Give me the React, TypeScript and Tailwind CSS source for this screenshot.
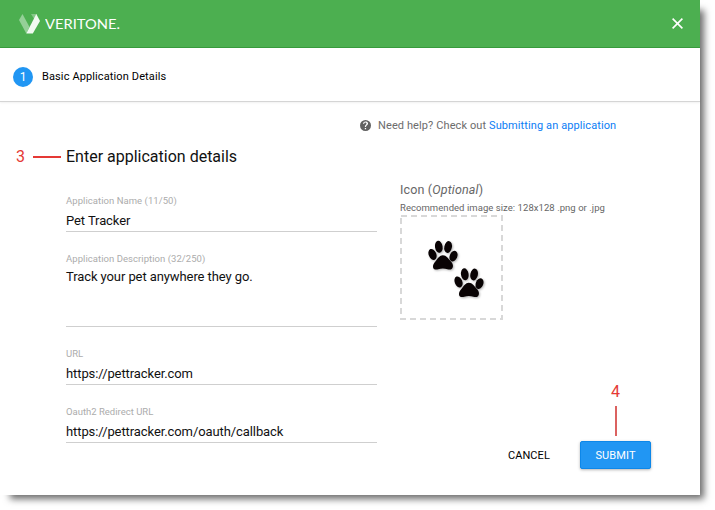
import React from "react";

type FieldProps = {
  label: string;
  value: string;
  className: string;
  labelClass: string;
  valueClass: string;
};

function Field({ label, value, className, labelClass, valueClass }: FieldProps) {
  return (
    <div className={`flex flex-col border-b border-[#cfcfcf] ${className}`}>
      <span className={`text-[9.5px] leading-3 whitespace-nowrap text-[#acacac] ${labelClass}`}>{label}</span>
      <span className={`text-[13px] leading-4 tracking-[-0.09px] whitespace-nowrap text-[#111] ${valueClass}`}>{value}</span>
    </div>
  );
}

function Paw() {
  return (
    <svg width="31" height="31" viewBox="0 0 31 31" className="drop-shadow-[1px_1px_1px_rgba(0,0,0,0.3)]" fill="#090304">
      <ellipse cx="11.3" cy="6.8" rx="3.8" ry="6" transform="rotate(-9 11.3 6.8)" />
      <ellipse cx="20.6" cy="7" rx="3.8" ry="6" transform="rotate(12 20.6 7)" />
      <ellipse cx="5" cy="14.4" rx="3.8" ry="5.7" transform="rotate(-22 5 14.4)" />
      <ellipse cx="26" cy="16.1" rx="3.8" ry="5.5" transform="rotate(22 26 16.1)" />
      <path d="M15.3 15.3c3.7 0 5.3 3.2 7.5 5.5 2 2.1 3 3.8 2.6 6-.6 3.2-3.3 3-5.5 2.4-3.1-.9-6.1-.9-9.2 0-2.5.7-5 .3-5.2-2.3-.2-2.1.9-3.8 2.8-6 2-2.4 3.7-5.6 7-5.6Z" />
    </svg>
  );
}

export default function App() {
  return (
    <div className="h-[510px] w-[715px] overflow-hidden bg-white font-[Roboto,sans-serif]">
      <main className="flex h-[495px] w-[700px] flex-col bg-white shadow-[7px_7px_7px_-3px_rgba(0,0,0,0.58)]">
        <header className="flex h-12 shrink-0 items-center justify-between border-b border-[#389b3d] bg-[#4caf50] pr-[17px] pl-[19px]">
          <div className="flex items-center">
            <svg width="21" height="20" viewBox="0 0 21 20">
              <path d="M0 6 3.5 0 10.5 13 7.3 19.5Z" fill="#94d097" />
              <path d="M12 0h6l-2.5 5.5Z" fill="#86c889" />
              <path d="M17.3 0 21 7 13.8 19.5H7.3Z" fill="#f1faf1" />
            </svg>
            <svg width="76" height="20" viewBox="0 0 76 20" className="ml-[5px]">
              <text x="0" y="15" fill="#fff" fontFamily="Lato, sans-serif" fontSize="13.8" textLength="75" lengthAdjust="spacingAndGlyphs">VERITONE.</text>
            </svg>
          </div>
          <svg width="11" height="11" viewBox="0 0 11 11" stroke="#fff" strokeWidth="1.6" fill="none">
            <path d="m.6.6 9.8 9.8M10.4.6.6 10.4" />
          </svg>
        </header>

        <div className="flex h-[54px] shrink-0 items-center border-b border-[#d5d5d5] pt-[5px] pl-[13px] shadow-[0_1px_2px_rgba(0,0,0,0.06)]">
          <span className="flex size-5 items-center justify-center rounded-full bg-[#2196f3] text-xs text-white">1</span>
          <span className="mt-px ml-[9px] text-[11px] tracking-[0.12px] text-black">Basic Application Details</span>
        </div>

        <div className="mt-[17px] flex h-[14px] items-center pl-[360px] text-[11px] leading-[14px] whitespace-nowrap text-[#6c6c6c]">
          <svg width="11" height="11" viewBox="0 0 24 24" fill="#616161" className="-mt-px">
            <path fillRule="evenodd" d="M12 0a12 12 0 1 0 0 24 12 12 0 0 0 0-24Zm1.3 20h-2.8v-2.7h2.8V20Zm2.6-9.2c-1.5 1.5-2.6 2-2.6 4.4h-2.7c0-3.2 1.2-4.1 2.7-5.6 2-2.1.4-4-1.3-4-1.6 0-2.7 1.1-2.7 2.7H6.5C6.5 5 9 3 12 3c5 0 7.5 4 3.9 7.8Z" />
          </svg>
          <span className="ml-[7px] tracking-[0.1px]">Need help? Check out <a className="text-[#0b7df5]">Submitting an application</a></span>
        </div>

        <div className="flex flex-1">
          <section className="w-[377px] shrink-0">
            <div className="mt-[14px] flex h-5 items-center">
              <span className="ml-4 w-4 text-base text-[#e53935]">3</span>
              <span className="ml-px h-[1.5px] w-7 bg-[#e53935]" />
              <h1 className="ml-[5px] text-base whitespace-nowrap text-[#111]">Enter application details</h1>
            </div>
            <div className="ml-[66px]">
              <Field label="Application Name (11/50)" value="Pet Tracker" className="mt-[28px] h-[37px]" labelClass="tracking-[0.05px]" valueClass="mt-[6px]" />
              <Field label="Application Description (32/250)" value="Track your pet anywhere they go." className="mt-[21px] h-[74px]" labelClass="tracking-[0.05px]" valueClass="mt-[4px]" />
              <Field label="URL" value="https://pettracker.com" className="mt-[21px] h-[37px]" labelClass="" valueClass="mt-[6px]" />
              <Field label="Oauth2 Redirect URL" value="https://pettracker.com/oauth/callback" className="mt-[21px] h-[37px]" labelClass="" valueClass="mt-[6px]" />
            </div>
          </section>

          <section className="ml-[23px] flex w-[251px] flex-col">
            <h2 className="mt-[49px] text-[12.5px] leading-4 tracking-[0.15px] text-[#666]">Icon (<i>Optional</i>)</h2>
            <p className="mt-[4px] text-[9.5px] leading-3 tracking-[0.05px] whitespace-nowrap text-[#666]">Recommended image size: 128x128 .png or .jpg</p>
            <div className="mt-px h-[105px] w-[103px] shrink-0">
              <svg width="103" height="105" viewBox="0 0 103 105">
                <rect x="1" y="1" width="101" height="103" fill="none" stroke="#d8d8d8" strokeWidth="2" strokeDasharray="6 4" />
                <g transform="translate(27.5 25)"><Paw /></g>
                <g transform="translate(53.5 52.5)"><Paw /></g>
              </svg>
            </div>
            <div className="mt-[64px] flex w-[71px] flex-col items-center self-end">
              <span className="text-base leading-4 text-[#e53935]">4</span>
              <span className="mt-[6px] h-[30px] w-[2px] bg-[#db6260]" />
            </div>
            <div className="mt-[5px] flex items-center justify-end">
              <button className="mt-[3px] mr-[30px] text-[11px] tracking-[0.1px] text-black">CANCEL</button>
              <button className="h-7 w-[71px] rounded-[2px] border border-[#0d87e9] bg-[#2196f3] pt-[2px] text-[11px] tracking-[0.1px] text-white shadow-[0_1px_3px_rgba(0,0,0,0.3)]">SUBMIT</button>
            </div>
          </section>
        </div>
      </main>
    </div>
  );
}
